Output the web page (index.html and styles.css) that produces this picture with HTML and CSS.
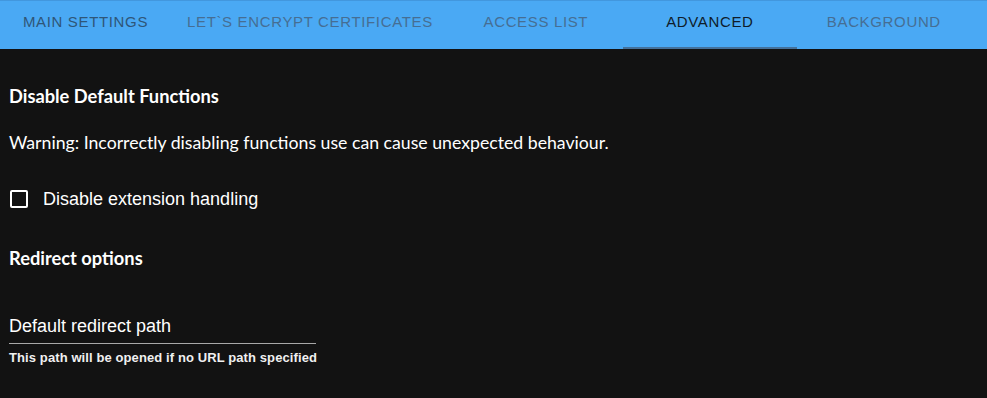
FILE: index.html
```html
<!DOCTYPE html>
<html lang="en">
<head>
    <meta charset="UTF-8">
    <meta name="viewport" content="width=device-width, initial-scale=1.0">
    <title>Proxy Host - Advanced</title>
    <link rel="stylesheet" href="styles.css">
</head>
<body>
    <nav class="tab-bar">
        <div class="tab tab-visited">Main Settings</div>
        <div class="tab">Let`s Encrypt Certificates</div>
        <div class="tab">Access List</div>
        <div class="tab tab-active">Advanced</div>
        <div class="tab">Background</div>
    </nav>

    <div class="tab-content">
        <h3 class="section-title">Disable Default Functions</h3>
        <p class="section-warning">Warning: Incorrectly disabling functions use can cause unexpected behaviour.</p>

        <label class="check-row">
            <span class="check-box"></span>
            <span class="check-label">Disable extension handling</span>
        </label>

        <h3 class="section-title section-title-redirect">Redirect options</h3>

        <div class="text-field">
            <div class="text-field-input">Default redirect path</div>
            <div class="text-field-hint">This path will be opened if no URL path specified</div>
        </div>
    </div>
</body>
</html>
```

FILE: styles.css
```css
body {
    margin: 0;
    padding: 0;
    background: #121212;
    color: #ffffff;
    font-family: "Liberation Sans", Arial, sans-serif;
    overflow: hidden;
}
.tab-bar {
    display: flex;
    height: 49px;
    background: #4aa9f4;
    border-top: 1px solid #4297de;
    box-sizing: border-box;
}
.tab {
    display: flex;
    align-items: flex-start;
    justify-content: center;
    min-width: 174px;
    padding: 12px 16px 0;
    box-sizing: border-box;
    font-family: "Liberation Sans", Arial, sans-serif;
    font-size: 15px;
    line-height: 18px;
    letter-spacing: 0.65px;
    white-space: nowrap;
    text-transform: uppercase;
    color: #466e93;
}
.tab-visited {
    min-width: 171px;
    color: #2f5678;
}
.tab-active {
    color: #0f1c2a;
    box-shadow: inset 0 -2px 0 #44719b;
}
.tab-content {
    padding: 0 9px;
}
.section-title {
    margin: 36px 0 0;
    font-family: Lato, "Noto Sans", sans-serif;
    font-size: 18.3px;
    font-weight: bold;
    line-height: 22px;
}
.section-warning {
    margin: 25px 0 0;
    font-family: Lato, "Noto Sans", sans-serif;
    font-size: 17.7px;
    line-height: 22px;
}
.check-row {
    display: flex;
    align-items: center;
    gap: 15px;
    margin-top: 34px;
    padding-left: 1px;
}
.check-box {
    width: 14px;
    height: 14px;
    border: 2px solid #ffffff;
    border-radius: 2px;
}
.check-label {
    font-size: 18px;
    line-height: 22px;
}
.section-title-redirect {
    margin-top: 37px;
}
.text-field {
    width: 307px;
    margin-top: 46px;
}
.text-field-input {
    padding-bottom: 6px;
    border-bottom: 1px solid #a8a8a8;
    font-size: 18px;
    line-height: 22px;
}
.text-field-hint {
    margin-top: 6px;
    font-size: 13px;
    font-weight: bold;
    line-height: 16px;
    letter-spacing: 0.1px;
    white-space: nowrap;
    color: #f0f0f0;
}
```
